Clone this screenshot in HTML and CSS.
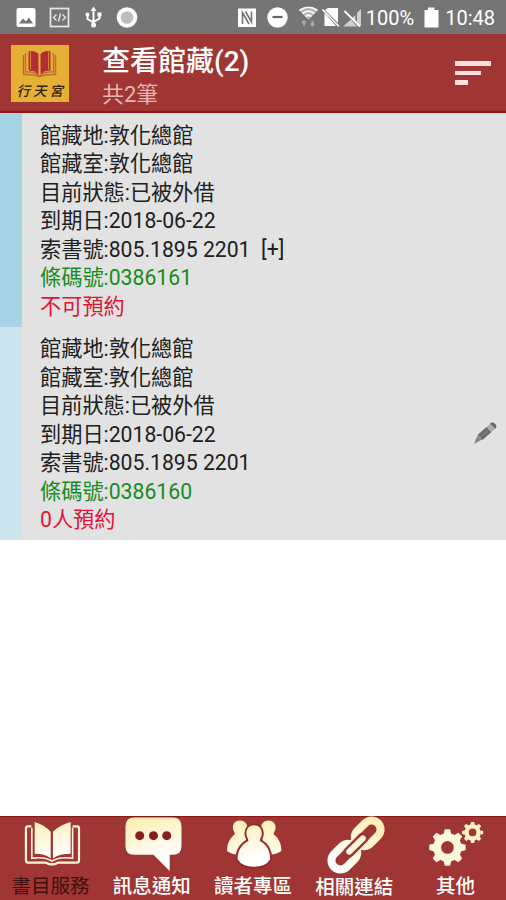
FILE: index.html
```
<!DOCTYPE html>
<html lang="zh-Hant">
<head>
    <meta charset="UTF-8">
    <meta name="viewport" content="width=device-width, initial-scale=1.0">
    <title>查看館藏</title>
    <link rel="stylesheet" href="styles.css">
</head>
<body>
    <div class="status">
        <svg class="status-icons" width="506" height="34" viewBox="0 0 506 34">
            <!-- picture -->
            <rect x="16.5" y="8" width="19" height="19" rx="2" fill="#fff"/>
            <path d="M19 23.5l4-5 3 3 3-4 4 6z" fill="#757575"/>
            <!-- code -->
            <rect x="50.5" y="8.5" width="18" height="18" fill="none" stroke="#e8e8e8" stroke-width="1.7"/>
            <path d="M56.5 14.5l-3 3 3 3M62.5 14.5l3 3-3 3M60.5 13.5l-2 8" fill="none" stroke="#e8e8e8" stroke-width="1.4"/>
            <!-- usb -->
            <path d="M93.5 9v16M87.5 15v4l6 3.5M99.5 14v4.5l-6 3.5" fill="none" stroke="#fff" stroke-width="2"/>
            <path d="M90.5 11l3-4.5 3 4.5z" fill="#fff"/>
            <circle cx="93.5" cy="25" r="2.5" fill="#fff"/>
            <circle cx="87.5" cy="14.5" r="2" fill="#fff"/>
            <rect x="97.5" y="12.5" width="4" height="4" fill="#fff"/>
            <!-- record -->
            <circle cx="127" cy="17.5" r="10.3" fill="#fff"/>
            <circle cx="127" cy="17.5" r="6.3" fill="#bdbdbd"/>
            <!-- nfc -->
            <rect x="238" y="8.5" width="18" height="18.5" fill="#fff"/>
            <path d="M242.5 24V12.5l6.5 11.5M245.5 11.5l6 10.5V11.5" fill="none" stroke="#757575" stroke-width="1.6"/>
            <!-- do not disturb -->
            <circle cx="277.5" cy="17.5" r="10.2" fill="#fff"/>
            <path d="M272.5 17h10" stroke="#666" stroke-width="2.2"/>
            <!-- wifi -->
            <path d="M299.5 10.5q9-6.5 18 0L308.5 20z" fill="#b5b5b5"/>
            <path d="M299.5 10.5q9-6.5 18 0M302.5 13.5q6-4.5 12 0M305.5 16.5q3-2.5 6 0" fill="none" stroke="#fff" stroke-width="1.7"/>
            <path d="M304 26v-5m-2 2l2-2 2 2M312.5 20.5v5m-2-2l2 2 2-2" fill="none" stroke="#aaa" stroke-width="1.7"/>
            <!-- no sim -->
            <path d="M328 8h10v15L325 10zM324.5 13l11.5 13h-11.5z" fill="#fff"/>
            <path d="M322.5 9.5L339 26.5" stroke="#fff" stroke-width="1.6"/>
            <!-- no signal -->
            <path d="M361 9v17h-4V13zM355.5 15v6L352 18zM343 26.5l8-7 6 7z" fill="#d0d0d0"/>
            <path d="M344.5 11L360 26.5" stroke="#fff" stroke-width="1.8"/>
            <!-- battery -->
            <path d="M424.5 10h3.5V7.5h6.5V10h4v17.5h-14z" fill="#fff"/>
        </svg>
        <span class="percent">100%</span>
        <span class="clock">10:48</span>
    </div>

    <header class="header">
        <svg class="logo" width="58" height="57" viewBox="0 0 58 57">
            <rect width="58" height="57" fill="#e6b037"/>
            <path d="M12.5 10v19.5q10-.5 16 2 6-2.5 16-2V10" fill="none" stroke="#bd7130" stroke-width="1.5"/>
            <path d="M14.5 8v19q9-.5 14 4 5-4.5 14-4V8" fill="none" stroke="#bd7130" stroke-width="1.3"/>
            <path d="M18 6.5v18.5q6 0 9 3.5V9Q24.5 6 18 6.5M39 6.5v18.5q-6 0-9 3.5V9Q32.5 6 39 6.5" fill="#b22e34" stroke="#b22e34"/>
            <path d="M19.5 6.5v18M37.5 6.5v18" stroke="#d98240" stroke-width="1"/>
            <text class="logo-text" x="5.5" y="50.5">行</text>
            <text class="logo-text" x="22" y="50.5">天</text>
            <text class="logo-text" x="38.5" y="50.5">宮</text>
        </svg>
        <div class="heading">
            <h1>查看館藏(2)</h1>
            <p>共2筆</p>
        </div>
        <div class="menu">
            <span class="bar"></span>
            <span class="bar mid"></span>
            <span class="bar short"></span>
        </div>
    </header>

    <main class="list">
        <div class="item">
            <div class="info">
                <p>館藏地:敦化總館</p>
                <p>館藏室:敦化總館</p>
                <p>目前狀態:已被外借</p>
                <p>到期日:2018-06-22</p>
                <p>索書號:805.1895 2201&nbsp; [+]</p>
                <p class="green">條碼號:0386161</p>
                <p class="red">不可預約</p>
            </div>
        </div>
        <div class="item light">
            <div class="info">
                <p>館藏地:敦化總館</p>
                <p>館藏室:敦化總館</p>
                <p>目前狀態:已被外借</p>
                <p>到期日:2018-06-22</p>
                <p>索書號:805.1895 2201</p>
                <p class="green">條碼號:0386160</p>
                <p class="red">0人預約</p>
            </div>
            <svg class="pencil" width="24" height="24" viewBox="0 0 24 24">
                <path d="M1 23l3.5-8.5L9 18.5z" fill="#858585"/>
                <path d="M4.5 14L13.5 6l5 5L9.5 19z" fill="#6c6c6c"/>
                <path d="M13.5 6l4-3.5 5 5-4 3.5z" fill="#aaa"/>
                <path d="M17 2.5q2.5-2 5 .3t.5 5z" fill="#666"/>
                <path d="M7 16.5l9-8" stroke="#858585" stroke-width="1"/>
            </svg>
        </div>
    </main>

    <nav class="tabs">
        <a class="tab active">
            <svg width="64" height="58" viewBox="0 0 64 58">
                <defs>
                    <linearGradient id="cream" gradientUnits="userSpaceOnUse" x1="20" y1="4" x2="30" y2="44">
                        <stop offset="0" stop-color="#fff0b8"/>
                        <stop offset="1" stop-color="#fff"/>
                    </linearGradient>
                    <linearGradient id="cream-link" gradientUnits="userSpaceOnUse" x1="60" y1="28" x2="8" y2="28">
                        <stop offset="0" stop-color="#fff0b8"/>
                        <stop offset="1" stop-color="#fff"/>
                    </linearGradient>
                </defs>
                <path d="M12 9.5H8.5q-2 0-2 2V44q0 2.5 2.5 2.5h18q6 3.5 12 0h19q2.5 0 2.5-2.5V11.5q0-2-2-2H54" fill="none" stroke="#fff7dc" stroke-width="2.2"/>
                <path d="M12.5 11v31Q26 40 33 45q7-5 21-3V11" fill="none" stroke="#fff7dc" stroke-width="1.6"/>
                <path d="M15.4 5q10 3 16.3 10v27q-6-4.5-16.3-4.5zM52 5q-11 3-18 10v27q7-4.5 18-4.5z" fill="url(#cream)"/>
            </svg>
            <span>書目服務</span>
        </a>
        <a class="tab">
            <svg width="64" height="58" viewBox="0 0 64 58">
                <path d="M14 .5h39q9 0 9 9v20q0 9-9 9h-3V55L33.5 38.5H14q-9 0-9-9v-20q0-9 9-9z" fill="url(#cream)"/>
                <g fill="#861f20">
                    <circle cx="19.5" cy="19" r="4.6"/>
                    <circle cx="33.5" cy="19" r="4.6"/>
                    <circle cx="47" cy="19" r="4.6"/>
                </g>
            </svg>
            <span>訊息通知</span>
        </a>
        <a class="tab">
            <svg width="64" height="58" viewBox="0 0 64 58">
                <g fill="url(#cream)">
                    <path id="side" d="M18.7 3.5c-4.5 0-7.2 3-7.2 7 0 3.5 2 4.5 2 7-5 4-8 9-7.8 17Q10 38 19 38.5L26 20q-1-2-.5-3.5 1-3 .8-6c-.3-4-3-7-7.6-7z"/>
                    <use href="#side" transform="matrix(-1 0 0 1 66.5 0)"/>
                    <path d="M33.3 8.5c-5 0-8 3.5-8 8 0 4 2 5 2 8-6 3-11 9-11 18.5Q21 50.7 33 50.7T49.5 43C49.5 33.5 45 27.5 39 24.5c0-3 2-4 2-8 0-4.5-3-8-7.7-8z" stroke="#96292a" stroke-width="4" paint-order="stroke"/>
                </g>
            </svg>
            <span>讀者專區</span>
        </a>
        <a class="tab">
            <svg class="link" width="64" height="58" viewBox="0 0 64 58">
                <g transform="rotate(-45 34 28)" fill="none" stroke="url(#cream-link)">
                    <rect x="36" y="19" width="29" height="18" rx="9" stroke-width="8"/>
                    <rect x="3" y="19" width="29" height="18" rx="9" stroke-width="8"/>
                    <path d="M24 28h20" stroke="#9f3634" stroke-width="11" stroke-linecap="round"/>
                    <path d="M24.5 27.9L43.5 28.1" stroke-width="6" stroke-linecap="round"/>
                </g>
            </svg>
            <span>相關連結</span>
        </a>
        <a class="tab">
            <svg width="64" height="58" viewBox="0 0 64 58">
                <g transform="translate(24.3 31)">
                    <circle r="10.5" fill="none" stroke="#fff9e0" stroke-width="8"/>
                    <g fill="#fff9e0">
                        <path id="tooth" d="M-4-13.5l1.3-5h5.4l1.3 5zM-4 13.5l1.3 5h5.4l1.3-5z"/>
                        <use href="#tooth" transform="rotate(45)"/>
                        <use href="#tooth" transform="rotate(90)"/>
                        <use href="#tooth" transform="rotate(135)"/>
                    </g>
                </g>
                <g transform="translate(49.9 15.7) scale(.58)">
                    <circle r="10.5" fill="none" stroke="#fff3ca" stroke-width="7.5"/>
                    <g fill="#fff3ca">
                        <use href="#tooth"/>
                        <use href="#tooth" transform="rotate(45)"/>
                        <use href="#tooth" transform="rotate(90)"/>
                        <use href="#tooth" transform="rotate(135)"/>
                    </g>
                </g>
            </svg>
            <span>其他</span>
        </a>
    </nav>
</body>
</html>
```
FILE: styles.css
```
* {
    box-sizing: border-box;
    margin: 0;
    padding: 0;
}
body {
    display: flex;
    flex-direction: column;
    height: 900px;
    background-color: white;
    font-family: Roboto, "Noto Sans CJK TC", sans-serif;
    overflow: hidden;
}
.status {
    position: relative;
    display: flex;
    justify-content: flex-end;
    align-items: center;
    gap: 31px;
    height: 34px;
    padding: 2px 11px 0 0;
    background-color: #757575;
    color: white;
    font-size: 20px;
}
.status-icons {
    position: absolute;
    left: 0;
    top: 0;
}
.header {
    display: flex;
    align-items: center;
    height: 79px;
    padding: 1px 15px 0 11px;
    background-color: #9f3634;
    border-bottom: 2px solid #961516;
}
.logo-text {
    font-family: "Noto Sans CJK TC", sans-serif;
    font-size: 13.5px;
    font-style: italic;
    font-weight: 500;
    fill: #2b2110;
}
.heading {
    flex: 1;
    margin-left: 33px;
    padding-top: 9px;
    color: white;
}
.heading h1 {
    font-size: 28px;
    font-weight: 500;
    line-height: 34px;
}
.heading p {
    color: #e6b4b2;
    font-size: 22px;
    line-height: 32px;
}
.menu {
    display: flex;
    flex-direction: column;
    gap: 5px;
    width: 36px;
}
.bar {
    width: 36px;
    height: 4.5px;
    background-color: #ffe0de;
}
.mid {
    width: 26px;
}
.short {
    width: 13px;
}
.list {
    flex: 1;
}
.item {
    display: flex;
    justify-content: space-between;
    align-items: center;
    height: 213.5px;
    padding: 0 9px 0 18px;
    border-left: 22px solid #a7d3e6;
    background-color: #e2e2e2;
}
.light {
    border-left-color: #cce4ee;
}
.info {
    padding-top: 3px;
    color: #202020;
    font-size: 21.2px;
    line-height: 28.5px;
    white-space: nowrap;
}
.info .green {
    color: #168c20;
}
.info .red {
    color: #df1438;
}
.tabs {
    display: flex;
    height: 84px;
    background-color: #9f3634;
    border-top: 1px solid #8b1718;
}
.tab {
    display: flex;
    flex: 1;
    flex-direction: column;
    align-items: center;
    color: white;
    font-size: 19.5px;
    font-weight: 500;
    line-height: 26px;
}
.tab svg {
    display: block;
}
.link {
    overflow: visible;
}
.active {
    color: #42100e;
    font-weight: 400;
}
```
